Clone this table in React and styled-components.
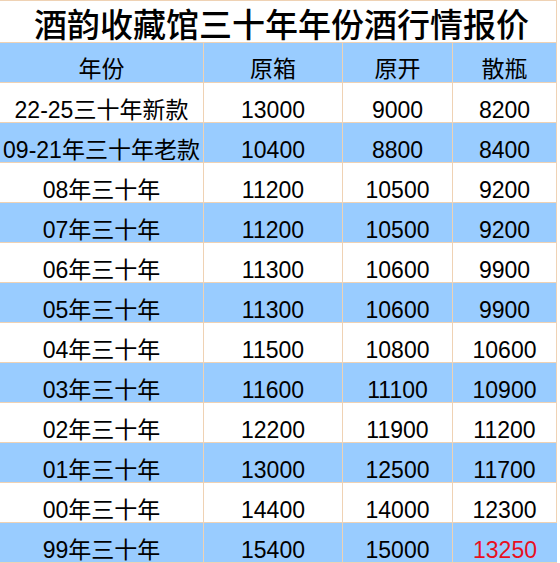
import React from 'react';
import styled, { createGlobalStyle } from 'styled-components';

const Global = createGlobalStyle`
  html, body { margin: 0; padding: 0; background: #fff; }
  body { font-family: "Liberation Sans", "Noto Sans CJK SC", sans-serif; color: #000; }
`;

const LINE = '#efd2b4';
const BLUE = '#99ccff';

const Sheet = styled.div`
  display: grid;
  grid-template-columns: 204px 139px 110px 104px;
  grid-template-rows: 42px;
  grid-auto-rows: 40px;
  width: 557px;
  border-top: 1px solid ${LINE};
  border-right: 1px solid ${LINE};
  box-sizing: border-box;
`;

const Title = styled.div`
  grid-column: 1 / -1;
  display: flex;
  align-items: center;
  justify-content: center;
  font-size: 33px;
  font-weight: 500;
  font-family: "Noto Sans CJK SC", sans-serif;
  line-height: 40px;
  padding-left: 6px;
  padding-top: 2px;
  border-bottom: 1px solid ${LINE};
  box-sizing: border-box;
`;

const Cell = styled.div`
  display: flex;
  align-items: flex-end;
  justify-content: center;
  padding-bottom: 0;
  font-size: 23px;
  line-height: 24px;
  white-space: nowrap;
  background: ${p => (p.$blue ? BLUE : '#fff')};
  color: ${p => (p.$red ? '#e8101e' : '#000')};
  border-right: 1px solid ${LINE};
  border-bottom: 1px solid ${LINE};
  box-sizing: border-box;
  &:last-child { border-right: none; }
`;

const HeadCell = styled(Cell)`
  padding-bottom: 1px;
`;

const rows = [
  ['22-25三十年新款', '13000', '9000', '8200'],
  ['09-21年三十年老款', '10400', '8800', '8400'],
  ['08年三十年', '11200', '10500', '9200'],
  ['07年三十年', '11200', '10500', '9200'],
  ['06年三十年', '11300', '10600', '9900'],
  ['05年三十年', '11300', '10600', '9900'],
  ['04年三十年', '11500', '10800', '10600'],
  ['03年三十年', '11600', '11100', '10900'],
  ['02年三十年', '12200', '11900', '11200'],
  ['01年三十年', '13000', '12500', '11700'],
  ['00年三十年', '14400', '14000', '12300'],
  ['99年三十年', '15400', '15000', '13250'],
];

export default function App() {
  return (
    <>
      <Global />
      <Sheet>
        <Title>酒韵收藏馆三十年年份酒行情报价</Title>
        {['年份', '原箱', '原开', '散瓶'].map(h => (
          <HeadCell key={h} $blue>{h}</HeadCell>
        ))}
        {rows.map((r, i) =>
          r.map((v, j) => (
            <Cell
              key={i + '-' + j}
              $blue={i % 2 === 1}
              $red={i === rows.length - 1 && j === 3}
            >
              {v}
            </Cell>
          ))
        )}
      </Sheet>
    </>
  );
}
